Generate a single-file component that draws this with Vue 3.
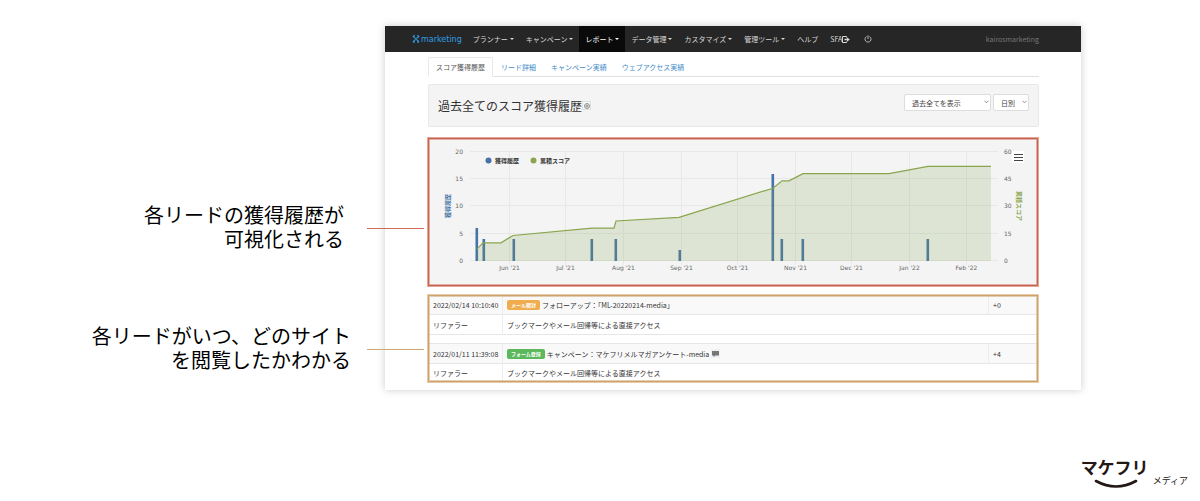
<script setup>
const menus = [
  { label: 'プランナー', caret: true },
  { label: 'キャンペーン', caret: true },
  { label: 'レポート', caret: true, active: true },
  { label: 'データ管理', caret: true },
  { label: 'カスタマイズ', caret: true },
  { label: '管理ツール', caret: true },
  { label: 'ヘルプ' }
]
const tabs = ['スコア獲得履歴', 'リード詳細', 'キャンペーン実績', 'ウェブアクセス実績']

const months = [
  [81, "Jun '21"], [137, "Jul '21"], [195, "Aug '21"], [253, "Sep '21"], [309, "Oct '21"],
  [367, "Nov '21"], [423, "Dec '21"], [481, "Jan '22"], [538, "Feb '22"]
]
const steps = [0, 1, 2, 3, 4].map(n => ({ y: 123 - Math.round(n * 27.3), left: n * 5, right: n * 15 }))
const bars = [
  [49, 6], [56, 4], [86, 4], [164, 4], [188, 4], [252, 2], [345, 16], [354, 4], [375, 4], [500, 4]
].map(([x, v]) => ({ x: x - 1, h: Math.round(v * 5.46) }))
const total = [
  [49, 6.5], [55, 10], [73, 10], [85, 14], [164, 18], [186, 18], [188, 22], [251, 24], [345, 40],
  [354, 44], [361, 44], [375, 48], [461, 48], [500, 52], [563, 52]
].map(([x, v]) => `${x},${(123 - v * 1.82).toFixed(1)}`).join(' ')
</script>

<template>
  <div class="page">
    <main class="stage">
      <aside class="notes">
        <div class="note red">
          <p>各リードの獲得履歴が<br>可視化される</p>
          <span class="lead"></span>
        </div>
        <div class="note tan">
          <p>各リードがいつ、どのサイト<br>を閲覧したかわかる</p>
          <span class="lead"></span>
        </div>
      </aside>

      <section class="window">
        <nav class="nav">
          <a class="brand" href="#">
            <svg width="8" height="8" viewBox="0 0 8 8">
              <g fill="none" stroke="#2f9fe6" stroke-width="1.3">
                <path d="M1 1L3 3M7 1L5 3M1 7L3 5M7 7L5 5" />
                <path d="M3 .7H1M5 .7H7M3 7.3H1M5 7.3H7" stroke-width=".8" />
              </g>
              <circle cx="4" cy="4" r="1" fill="#2f9fe6" />
            </svg>
            <span>marketing</span>
          </a>
          <a v-for="m in menus" :key="m.label" href="#" class="item" :class="{ active: m.active }">
            {{ m.label }}<i v-if="m.caret" class="caret"></i>
          </a>
          <a href="#" class="item sfa">SFA
            <svg width="8" height="7" viewBox="0 0 8 7">
              <path d="M4.500 1.500V.5H.5v6h4V5.500" fill="none" stroke="#d8d8d8" />
              <path d="M2.500 2.800H5V1.200L7.800 3.500 5 5.800V4.200H2.500z" fill="#d8d8d8" />
            </svg>
          </a>
          <a href="#" class="item" aria-label="ログアウト">
            <svg width="8" height="8" viewBox="0 0 8 8" fill="none" stroke="#b8b8b8">
              <path d="M2.500 1.500A3 3 0 1 0 5.500 1.500M4 .5V4" />
            </svg>
          </a>
          <span class="user">kairosmarketing</span>
        </nav>

        <div class="content">
          <div class="tabs">
            <a v-for="(t, i) in tabs" :key="t" href="#" :class="{ active: i === 0 }">{{ t }}</a>
          </div>

          <header class="panel">
            <h1>過去全てのスコア獲得履歴</h1>
            <button class="target" aria-label="設定">
              <svg width="6" height="6" viewBox="0 0 6 6" fill="none" stroke="#666">
                <circle cx="3" cy="3" r="2.500" stroke-width=".7" />
                <path d="M3 1.500V4.500M1.500 3H4.500" stroke-width=".7" />
              </svg>
            </button>
            <div class="filters">
              <span class="pick wide">
                <select aria-label="表示期間"><option>過去全てを表示</option></select>
                <svg width="5" height="4" viewBox="0 0 5 4"><path d="M.5 .8L2.500 2.800 4.500 .8" fill="none" stroke="#777" stroke-width=".8" /></svg>
              </span>
              <span class="pick">
                <select aria-label="集計単位"><option>日別</option></select>
                <svg width="5" height="4" viewBox="0 0 5 4"><path d="M.5 .8L2.500 2.800 4.500 .8" fill="none" stroke="#777" stroke-width=".8" /></svg>
              </span>
            </div>
          </header>

          <section class="chart">
            <svg class="plot" viewBox="0 0 608 146" role="img" aria-label="獲得履歴と累積スコア">
              <g transform="translate(-1 -1)">
                <g stroke="#e8e8e8" stroke-width="1">
                  <line v-for="s in steps" :key="s.y" x1="42" x2="570" :y1="s.y - .5" :y2="s.y - .5" />
                  <line v-for="m in months" :key="m[0]" :x1="m[0] + .5" :x2="m[0] + .5" y1="14" y2="127" />
                </g>
                <rect v-for="b in bars" :key="b.x" :x="b.x - .5" :y="123 - b.h" width="2.600" :height="b.h" fill="#4572a7" />
                <polygon :points="`49,123 ${total} 563,123`" fill="#89a54e" fill-opacity=".2" />
                <polyline :points="total" fill="none" stroke="#89a54e" stroke-width="1.200" />
                <g class="ticks">
                  <text v-for="s in steps" :key="'l' + s.left" x="35" :y="s.y + 2" text-anchor="end">{{ s.left }}</text>
                  <text v-for="s in steps" :key="'r' + s.right" x="576" :y="s.y + 2">{{ s.right }}</text>
                  <text v-for="m in months" :key="m[1]" :x="m[0] + .5" y="132" text-anchor="middle">{{ m[1] }}</text>
                </g>
                <circle cx="60.500" cy="22.500" r="3" fill="#4572a7" />
                <circle cx="105.500" cy="22.500" r="3" fill="#89a54e" />
                <g class="names">
                  <text x="67" y="25">獲得履歴</text>
                  <text x="112" y="25">累積スコア</text>
                  <text class="blue" transform="translate(22 68) rotate(-90)" text-anchor="middle">獲得履歴</text>
                  <text class="green" transform="translate(589 68) rotate(90)" text-anchor="middle">累積スコア</text>
                </g>
              </g>
            </svg>
            <button class="menu" aria-label="グラフメニュー"><i></i><i></i><i></i></button>
          </section>

          <div class="log">
            <table>
              <colgroup><col class="when"><col><col class="score"></colgroup>
              <tbody>
                <tr class="head first">
                  <td>2022/02/14 10:10:40</td>
                  <td><div class="entry"><span class="badge mail">メール開封</span><span>フォローアップ：「ML-20220214-media」</span></div></td>
                  <td>+0</td>
                </tr>
                <tr><td>リファラー</td><td colspan="2">ブックマークやメール回帰等による直接アクセス</td></tr>
                <tr class="gap"><td colspan="3"></td></tr>
                <tr class="head">
                  <td>2022/01/11 11:39:08</td>
                  <td>
                    <div class="entry">
                      <span class="badge form">フォーム登録</span><span>キャンペーン：マケフリメルマガアンケート-media</span>
                      <span class="bubble"><svg width="7" height="6" viewBox="0 0 7 6"><path d="M0 0H7V4.500H3.500L1.500 6V4.500H0z" fill="#777" /></svg></span>
                    </div>
                  </td>
                  <td>+4</td>
                </tr>
                <tr class="last"><td>リファラー</td><td colspan="2">ブックマークやメール回帰等による直接アクセス</td></tr>
              </tbody>
            </table>
          </div>
        </div>
      </section>
    </main>

    <footer class="footer">
      <div class="mark">
        <span>マケフリ</span>
        <svg width="46" height="10" viewBox="0 0 46 10"><path d="M4 2Q24 13 44 2" fill="none" stroke="#231815" stroke-width="2.600" stroke-linecap="round" /></svg>
      </div>
      <span class="media">メディア</span>
    </footer>
  </div>
</template>

<style>
body {
  margin: 0;
  background: #fff;
}
</style>

<style scoped>
.page {
  padding-top: 26px;
  font-family: "Noto Sans CJK JP", "Noto Sans", sans-serif;
  font-size: 7px;
  color: #333;
}
.page * { box-sizing: border-box; }
a { color: inherit; text-decoration: none; }
button { font: inherit; padding: 0; cursor: pointer; }

.stage { display: flex; }
.notes {
  flex: none;
  width: 385px;
  padding-top: 178px;
  display: flex;
  flex-direction: column;
  gap: 73px;
}
.note {
  position: relative;
  z-index: 1;
  display: flex;
  align-items: center;
  justify-content: flex-end;
  margin-right: -39px;
  gap: 23px;
}
.note.tan { gap: 16px; }
.note p {
  margin: 0;
  font-family: "Liberation Sans", "Noto Sans CJK JP", sans-serif;
  font-size: 20px;
  line-height: 24px;
  color: #000;
  text-align: right;
  white-space: nowrap;
}
.lead { width: 57px; height: 1px; background: #cf6a57; }
.tan .lead { background: #d0a874; }

.window {
  flex: 1;
  min-width: 0;
  margin-right: 119px;
  padding-bottom: 8px;
  background: #fff;
  box-shadow: 0 0 8px rgba(0, 0, 0, .2);
}

.nav {
  display: flex;
  align-items: stretch;
  height: 26px;
  padding: 0 42px 0 27px;
  background: #262626;
  color: #d8d8d8;
}
.brand {
  display: flex;
  align-items: center;
  gap: 1px;
  margin-right: 5px;
  font-family: "DejaVu Sans", sans-serif;
  font-size: 8px;
  color: #2f9fe6;
}
.item {
  display: flex;
  align-items: center;
  padding: 0 6px;
  white-space: nowrap;
}
.item.active { background: #0a0a0a; color: #fff; }
.sfa { margin-right: 2px; }
.caret {
  margin-left: 2px;
  border: 2px solid transparent;
  border-top-color: currentColor;
  border-bottom: 0;
}
.user { margin-left: auto; align-self: center; color: #777; }

.content { padding: 5px 42px 0 43px; }
.tabs {
  display: flex;
  height: 20px;
  border-bottom: 1px solid #e0e0e0;
  color: #428bca;
}
.tabs a {
  height: 20px;
  padding: 0 7px 0 8px;
  line-height: 20px;
  white-space: nowrap;
}
.tabs .active {
  padding: 0 7px;
  border: 1px solid #e8e8e8;
  border-bottom-color: #fff;
  border-radius: 2px 2px 0 0;
  line-height: 18px;
  color: #555;
  background: #fff;
}

.panel {
  display: flex;
  align-items: center;
  margin-top: 7px;
  height: 43px;
  padding: 0 9px;
  background: #f4f4f4;
  border: 1px solid #e8e8e8;
  border-radius: 2px;
}
h1 { margin: 0; font-size: 12px; font-weight: 400; line-height: 18px; }
.target {
  display: grid;
  place-items: center;
  width: 9px;
  height: 9px;
  border: 1px solid #e0e0e0;
  background: #f8f8f8;
}
.filters { display: flex; gap: 2px; margin: 0 0 6px auto; }
.pick { position: relative; width: 36px; height: 17px; }
.pick.wide { width: 87px; }
.pick svg { position: absolute; right: 2px; top: 6px; pointer-events: none; }
select {
  width: 100%;
  height: 17px;
  padding: 0 7px;
  appearance: none;
  font: inherit;
  color: #444;
  background: #fff;
  border: 1px solid #ddd;
  border-radius: 2px;
}

.chart, .log {
  margin-right: 1px;
  border: 1px solid #c9604e;
}
.chart {
  position: relative;
  margin-top: 11px;
  background: #f4f4f4;
  box-shadow: 0 0 0 1px rgba(207, 106, 87, .6), inset 0 0 0 1px rgba(207, 106, 87, .5);
}
.plot { display: block; width: 100%; height: auto; }
.ticks { font: 6px "DejaVu Sans", sans-serif; fill: #666; }
.names { font-size: 6px; font-weight: 700; fill: #333; }
.names .blue { fill: #4572a7; }
.names .green { fill: #89a54e; }
.menu {
  position: absolute;
  top: 12px;
  right: 13px;
  display: grid;
  align-content: center;
  justify-content: center;
  gap: 2px;
  width: 12px;
  height: 12px;
  background: #fff;
  border: 0;
}
.menu i { width: 9px; height: 1px; background: #444; }

.log {
  position: relative;
  margin-top: 9px;
  border-color: #d0a268;
  box-shadow: 0 0 0 1px rgba(208, 168, 116, .6);
}
.log::after {
  content: "";
  position: absolute;
  inset: 0;
  border: 1px solid rgba(208, 168, 116, .55);
  pointer-events: none;
}
table {
  width: 100%;
  table-layout: fixed;
  border-collapse: separate;
  border-spacing: 0;
}
.when { width: 74px; }
.score { width: 49px; }
td {
  height: 20px;
  padding: 0 4px;
  line-height: 10px;
  vertical-align: middle;
  white-space: nowrap;
  border-bottom: 1px solid #e6e6e6;
}
tr:not(.gap) td:first-child { border-right: 1px solid #ececec; }
.head td { background: #f9f9f9; }
.head td:last-child { border-left: 1px solid #ececec; }
.first td { height: 19px; }
.gap td { height: 9px; padding: 0; }
.last td { height: 17px; border-bottom: 0; }
.entry { display: flex; align-items: center; gap: 2px; }
.badge {
  height: 10px;
  padding: 0 4px;
  border-radius: 2px;
  font-size: 5px;
  font-weight: 700;
  line-height: 10px;
  color: #fff;
}
.mail { background: #f0ad4e; }
.form { background: #5cb85c; }
.bubble {
  display: grid;
  place-items: center;
  width: 9px;
  height: 9px;
  background: #f0f0f0;
}

.footer {
  display: flex;
  justify-content: flex-end;
  align-items: flex-end;
  gap: 4px;
  margin-top: 65px;
  padding-right: 12px;
  color: #231815;
}
.mark { display: grid; justify-items: center; }
.mark span { font-size: 17px; font-weight: 700; line-height: 24px; }
.media { font-size: 9px; line-height: 16px; }
</style>
